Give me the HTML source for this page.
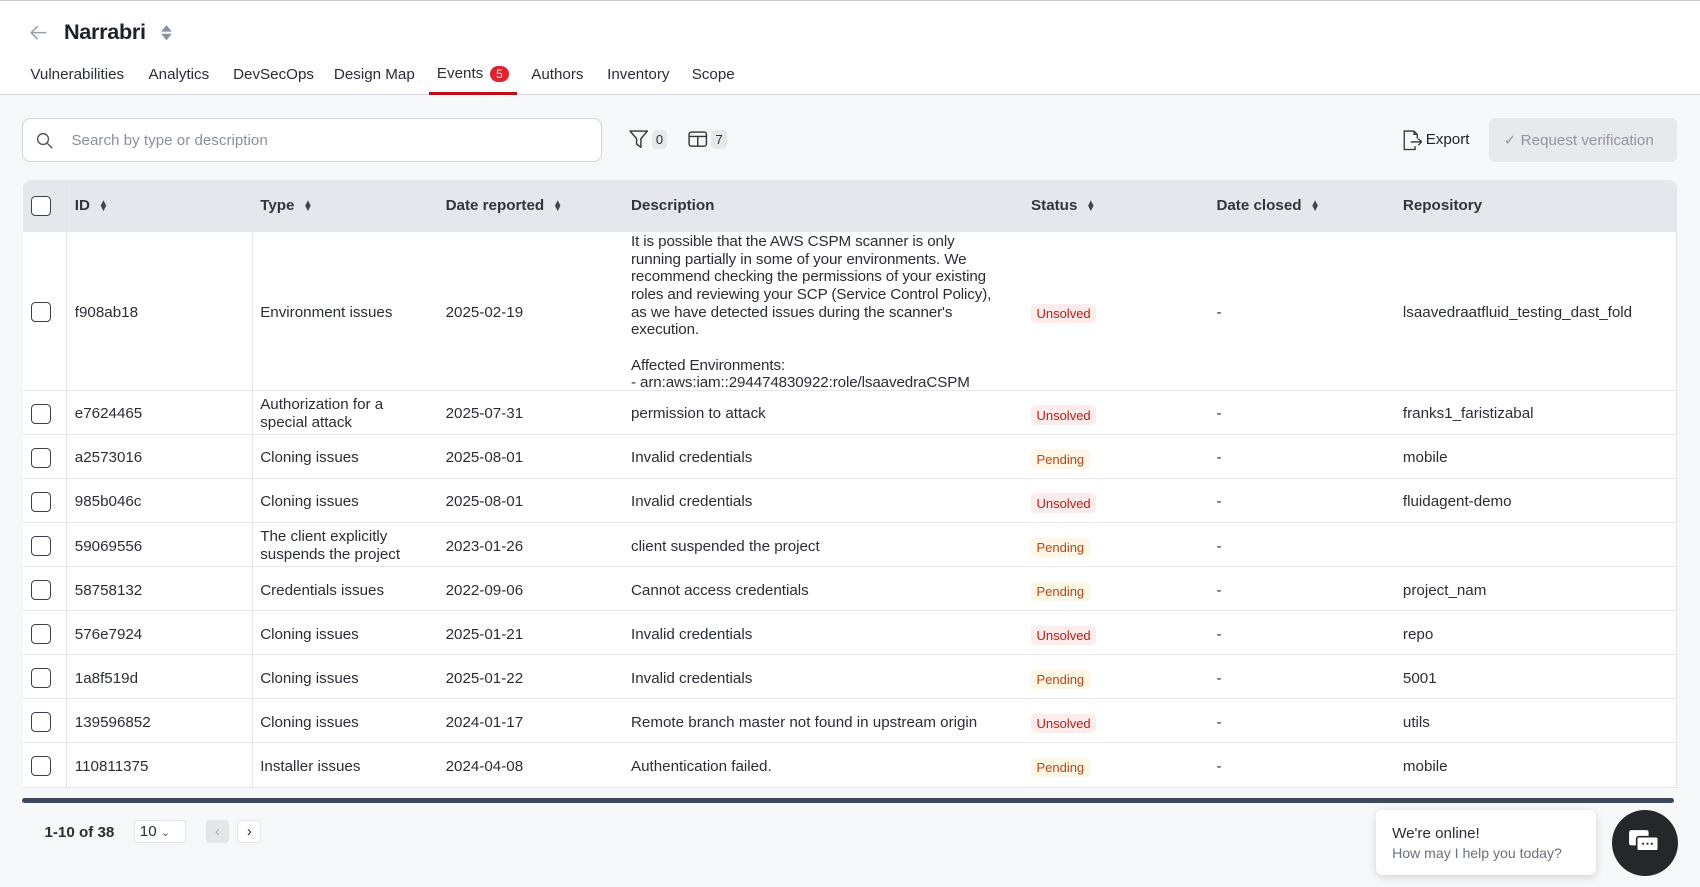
<!DOCTYPE html>
<html><head><meta charset="utf-8"><style>
*{box-sizing:border-box;margin:0;padding:0}
html,body{width:1700px;height:887px;overflow:hidden;background:#f7f8fa}
#w{zoom:1.08418;width:1568px;height:818px;position:relative;font-family:"Liberation Sans",sans-serif;color:#2a2d33;font-size:14px}
.top{position:absolute;left:0;top:0;width:1568px;height:88px;background:#fff;border-top:1px solid #c9ccd3;border-bottom:1px solid #d4d7de}
.abs{position:absolute}
.tab{position:absolute;top:60px;font-size:14px;color:#2a2d33}
.search{position:absolute;left:20px;top:109px;width:535px;height:40px;border:1px solid #d0d4db;border-radius:8px;background:#fff}
.badge{display:inline-block;background:#e7e8ec;border-radius:4px;font-size:12px;padding:2px 4px;color:#2a2d33}
.tbl{position:absolute;left:21px;top:166px;width:1526px;background:#fff;border-radius:8px 8px 0 0;overflow:hidden;border-right:1px solid #e2e4e9}
.hd{height:48px;background:#e5e7ec;position:relative}
.hd span{position:absolute;top:16px;font-weight:bold;font-size:14px;color:#2f3540}
.row{position:relative;border-bottom:1px solid #e4e6eb}
.row div{position:absolute;font-size:14px}
.cb{position:absolute;left:8px;width:18px;height:18px;border:1.5px solid #3a3f48;border-radius:4px;background:#fff}
.vl{position:absolute;top:0;bottom:0;width:1px;background:#e2e4e9}
.st{font-size:12px!important;padding:2px 5px;border-radius:4px}
.u{background:#fdeceb;color:#b42318}
.p{background:#fef7e6;color:#b4471a}
.sort{font-size:9px;line-height:5px;display:inline-block;vertical-align:middle;margin-left:8px;color:#444}
</style></head><body><div id="w">
<div class="top">
<svg class="abs" style="left:27px;top:21px" width="17" height="16" viewBox="0 0 17 16"><path d="M16 8H2M8 2L2 8l6 6" fill="none" stroke="#9aa0aa" stroke-width="1.4"/></svg>
<div class="abs" style="left:59px;top:17px;font-size:20px;font-weight:bold;color:#1d2129;letter-spacing:-0.3px">Narrabri</div>
<svg class="abs" style="left:148px;top:21px" width="12" height="16" viewBox="0 0 12 16"><path d="M6 1L11 7H1zM6 15L11 9H1z" fill="#8c929c"/></svg>
<div class="tab" style="left:28px">Vulnerabilities</div>
<div class="tab" style="left:137px">Analytics</div>
<div class="tab" style="left:215px">DevSecOps</div>
<div class="tab" style="left:308px">Design Map</div>
<div class="tab" style="left:403px;top:59px">Events <span style="display:inline-block;background:#e5202e;color:#fff;border-radius:9px;font-size:11px;padding:1px 6px;margin-left:2px">5</span></div>
<div class="abs" style="left:396px;top:84px;width:81px;height:3px;background:#bf0b1a"></div>
<div class="tab" style="left:490px">Authors</div>
<div class="tab" style="left:560px">Inventory</div>
<div class="tab" style="left:638px">Scope</div>
</div>
<div class="search">
<svg class="abs" style="left:12px;top:12px" width="16" height="16" viewBox="0 0 16 16"><circle cx="6.5" cy="6.5" r="5" fill="none" stroke="#555" stroke-width="1.3"/><path d="M10.5 10.5L15 15" stroke="#555" stroke-width="1.3"/></svg>
<div class="abs" style="left:45px;top:12px;color:#8a909c;font-size:14px">Search by type or description</div>
</div>
<svg class="abs" style="left:580px;top:120px" width="18" height="17" viewBox="0 0 18 17"><path d="M1 1h16l-6 7v8l-4-3V8z" fill="none" stroke="#333" stroke-width="1.3" stroke-linejoin="round"/></svg>
<span class="badge abs" style="left:601px;top:120px">0</span>
<svg class="abs" style="left:635px;top:121px" width="18" height="15" viewBox="0 0 18 15"><rect x="1" y="1" width="16" height="13" rx="2" fill="none" stroke="#333" stroke-width="1.3"/><path d="M1 5h16M9 5v9" stroke="#333" stroke-width="1.3"/></svg>
<span class="badge abs" style="left:656px;top:120px">7</span>
<svg class="abs" style="left:1292px;top:120px" width="20" height="19" viewBox="0 0 20 19"><path d="M12 1H3v17h10v-3M12 1l3 3v4M12 1v3h3M9 11h10M16 8l3 3-3 3" fill="none" stroke="#333" stroke-width="1.2"/></svg>
<div class="abs" style="left:1315px;top:121px;font-size:14px;color:#1d2129">Export</div>
<div class="abs" style="left:1373px;top:109px;width:174px;height:40px;background:#e8e9ed;border-radius:5px;color:#9096a0;font-size:14px;padding:12px 0 0 14px">✓ Request verification</div>
<div class="tbl">
<div class="hd"><div class="cb" style="top:15px"></div><div class="vl" style="left:40px"></div><div class="vl" style="left:211px"></div>
<span style="left:48px">ID<i class="sort">▲<br>▼</i></span>
<span style="left:219px">Type<i class="sort">▲<br>▼</i></span>
<span style="left:390px">Date reported<i class="sort">▲<br>▼</i></span>
<span style="left:561px">Description</span>
<span style="left:930px">Status<i class="sort">▲<br>▼</i></span>
<span style="left:1101px">Date closed<i class="sort">▲<br>▼</i></span>
<span style="left:1273px">Repository</span></div>
<div class="row" style="height:147px"><div class="vl" style="left:40px"></div><div class="vl" style="left:211px"></div><div class="cb" style="top:65px"></div>
<div style="left:48px;top:66px">f908ab18</div><div style="left:219px;top:66px">Environment issues</div><div style="left:390px;top:66px">2025-02-19</div>
<div style="left:561px;top:1px;width:345px;line-height:16.3px;letter-spacing:-0.1px">It is possible that the AWS CSPM scanner is only running partially in some of your environments. We recommend checking the permissions of your existing roles and reviewing your SCP (Service Control Policy), as we have detected issues during the scanner's execution.<br><br>Affected Environments:<br>- arn:aws:iam::294474830922:role/lsaavedraCSPM</div>
<div class="st u" style="left:930px;top:66px">Unsolved</div><div style="left:1101px;top:66px">-</div><div style="left:1273px;top:66px">lsaavedraatfluid_testing_dast_fold</div></div>
</div>
<div class="abs" style="left:20px;top:736px;width:1524px;height:5px;background:#3d4758;border-radius:3px"></div>
<div class="abs" style="left:41px;top:760px;font-weight:bold;font-size:14px">1-10 of 38</div>
<div class="abs" style="left:124px;top:756px;width:48px;height:22px;background:#fff;border:1px solid #e3e5ea;border-radius:3px;font-size:14px;padding:2px 4px">10 <span style="font-size:10px;color:#555">&#8964;</span></div>
<div class="abs" style="left:190px;top:756px;width:21px;height:22px;background:#e4e6ea;border-radius:3px;color:#aaa;text-align:center;line-height:22px">‹</div>
<div class="abs" style="left:219px;top:756px;width:22px;height:22px;background:#fff;border:1px solid #e3e5ea;border-radius:3px;text-align:center;line-height:20px">›</div>
<div class="abs" style="left:1269px;top:747px;width:203px;height:60px;background:#fff;border-radius:6px;box-shadow:0 2px 8px rgba(0,0,0,.15);padding:14px 15px">
<div style="font-size:14px;color:#2a2d33">We're online!</div><div style="font-size:13px;color:#6b7079;margin-top:3px">How may I help you today?</div></div>
<div class="abs" style="left:1487px;top:747px;width:61px;height:61px;border-radius:50%;background:#25272b"><svg style="margin:17px 0 0 15px" width="30" height="26" viewBox="0 0 30 26"><rect x="1" y="2" width="18" height="14" rx="2" fill="#fff"/><rect x="8" y="8" width="20" height="13" rx="2" fill="#fff" stroke="#25272b" stroke-width="1.5"/><circle cx="14" cy="14.5" r="1" fill="#25272b"/><circle cx="18" cy="14.5" r="1" fill="#25272b"/><circle cx="22" cy="14.5" r="1" fill="#25272b"/></svg></div>
</div>
<script>
var d=[["e7624465","Authorization for a<br>special attack","2025-07-31","permission to attack","u","franks1_faristizabal"],
["a2573016","Cloning issues","2025-08-01","Invalid credentials","p","mobile"],
["985b046c","Cloning issues","2025-08-01","Invalid credentials","u","fluidagent-demo"],
["59069556","The client explicitly<br>suspends the project","2023-01-26","client suspended the project","p",""],
["58758132","Credentials issues","2022-09-06","Cannot access credentials","p","project_nam"],
["576e7924","Cloning issues","2025-01-21","Invalid credentials","u","repo"],
["1a8f519d","Cloning issues","2025-01-22","Invalid credentials","p","5001"],
["139596852","Cloning issues","2024-01-17","Remote branch master not found in upstream origin","u","utils"],
["110811375","Installer issues","2024-04-08","Authentication failed.","p","mobile"]];
var h='';d.forEach(function(r){var two=r[1].indexOf('<br>')>0;
h+='<div class="row" style="height:40.6px"><div class="vl" style="left:40px"></div><div class="vl" style="left:211px"></div><div class="cb" style="top:12px"></div>'+
'<div style="left:48px;top:13px">'+r[0]+'</div><div style="left:219px;top:'+(two?4:13)+'px;line-height:16.5px">'+r[1]+'</div><div style="left:390px;top:13px">'+r[2]+'</div><div style="left:561px;top:13px">'+r[3]+'</div><div class="st '+r[4]+'" style="left:930px;top:13px">'+(r[4]=='u'?'Unsolved':'Pending')+'</div><div style="left:1101px;top:13px">-</div><div style="left:1273px;top:13px">'+r[5]+'</div></div>';});
document.querySelector('.tbl').insertAdjacentHTML('beforeend',h);
</script>
</body></html>
